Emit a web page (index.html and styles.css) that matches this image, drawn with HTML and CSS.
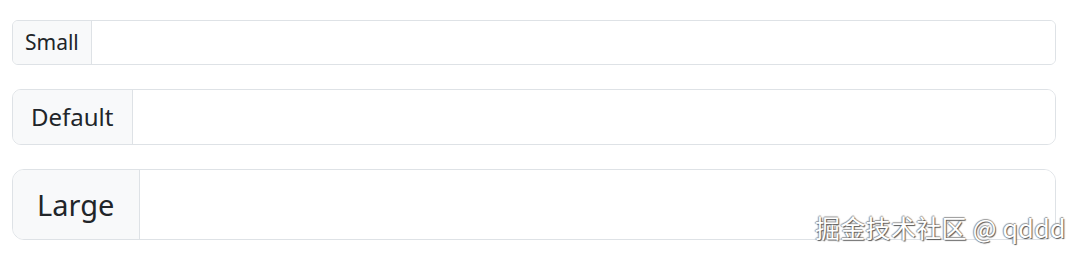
FILE: index.html
```html
<!DOCTYPE html>
<html lang="zh">
<head>
<meta charset="utf-8">
<title>Input group sizing</title>
<link rel="stylesheet" href="styles.css">
</head>
<body>
<main class="page">
  <div class="input-group input-group-sm">
    <span class="addon">Small</span>
    <input class="control" type="text" aria-label="Small">
  </div>
  <div class="input-group input-group-md">
    <span class="addon">Default</span>
    <input class="control" type="text" aria-label="Default">
  </div>
  <div class="input-group input-group-lg">
    <span class="addon">Large</span>
    <input class="control" type="text" aria-label="Large">
  </div>
</main>
<div class="watermark">掘金技术社区 @ qddd</div>
</body>
</html>
```

FILE: styles.css
```css
* { box-sizing: border-box; }
html, body { margin: 0; padding: 0; background: #fff; }
body {
  font-family: "Noto Sans", "Open Sans", "Noto Sans CJK SC", sans-serif;
  color: #212529;
  width: 1077px;
  height: 256px;
  overflow: hidden;
  position: relative;
}
.page {
  display: flex;
  flex-direction: column;
  gap: 24px;
  padding: 20px 21px 0 12px;
}
.input-group {
  display: flex;
  align-items: stretch;
  border: 1px solid #dee2e6;
  background: #fff;
  overflow: hidden;
}
.addon {
  display: flex;
  align-items: center;
  background: #f8f9fa;
  border-right: 1px solid #dee2e6;
  white-space: nowrap;
  line-height: 1;
}
.control {
  flex: 1;
  border: 0;
  outline: none;
  background: #fff;
  font: inherit;
  min-width: 0;
}
.input-group-sm { height: 45px; border-radius: 6px; font-size: 21px; }
.input-group-sm .addon { padding: 0 12px 0 12px; }
.input-group-md { height: 56px; border-radius: 9px; font-size: 24px; }
.input-group-md .addon { padding: 0 19px 0 18px; }
.input-group-lg { height: 71px; border-radius: 12px; font-size: 29px; }
.input-group-lg .addon { padding: 0 25px 0 24px; }
.watermark {
  position: absolute;
  left: 815px;
  top: 215px;
  font-family: "Noto Sans CJK SC", "Noto Sans", sans-serif;
  font-size: 25px;
  letter-spacing: 0.3px;
  line-height: 1;
  color: #fff;
  text-shadow: 1px 1px 1px #555, -1px 0 1px #999, 0 -1px 1px #999;
  white-space: nowrap;
}
```
